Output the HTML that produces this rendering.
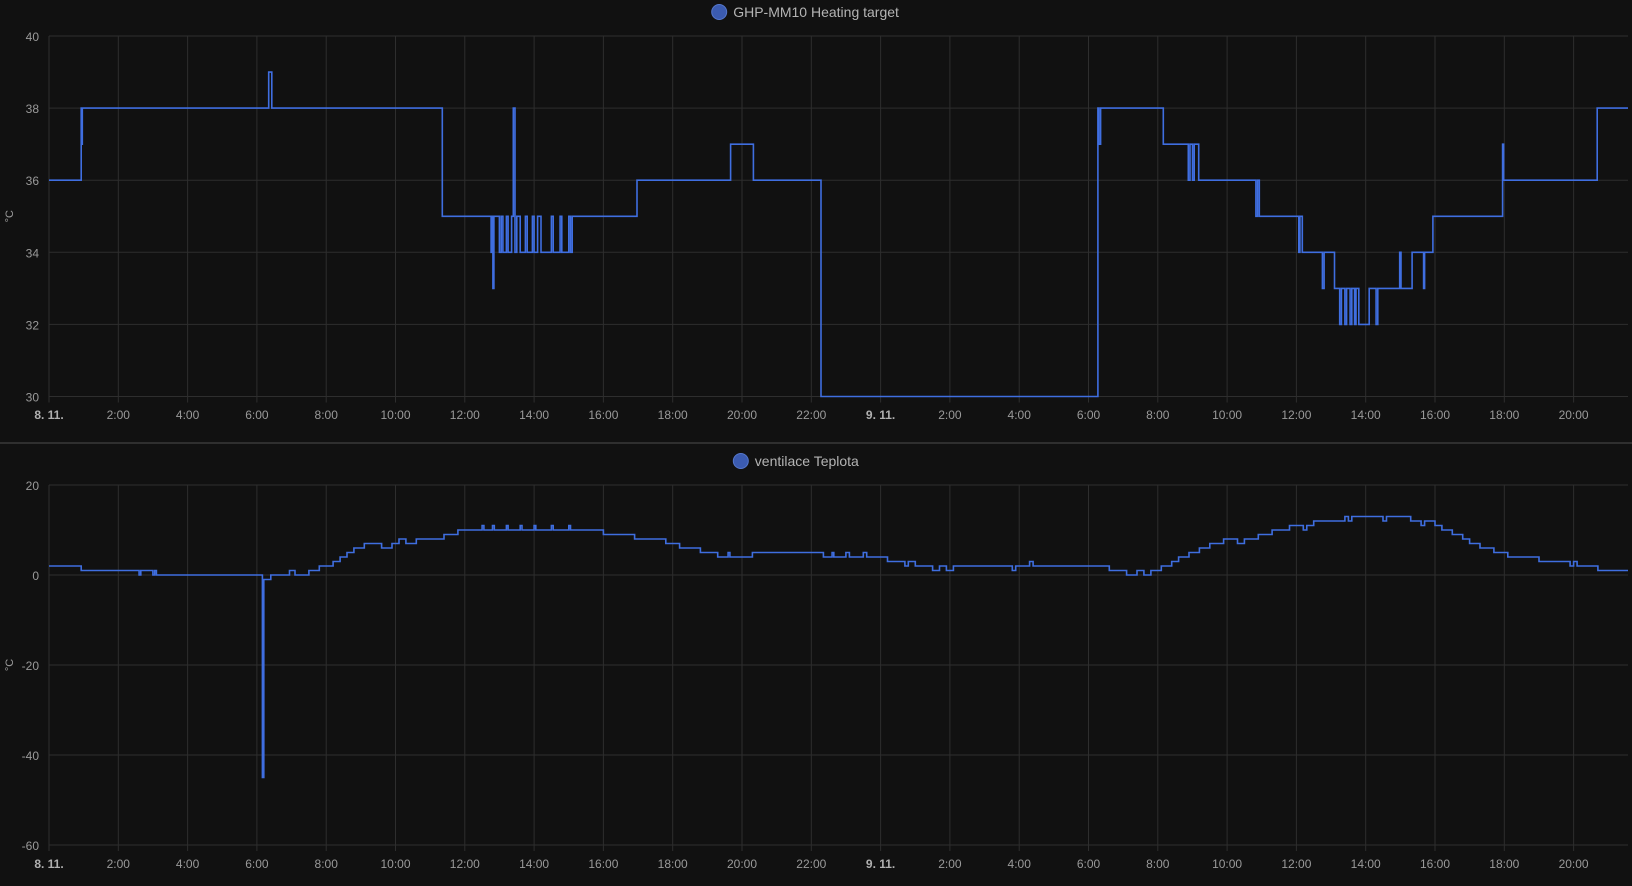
<!DOCTYPE html>
<html><head><meta charset="utf-8"><style>
html,body{margin:0;padding:0;background:#111111;width:1632px;height:886px;overflow:hidden}
svg{display:block}
text{font-family:"Liberation Sans",sans-serif;}
</style></head><body>
<svg id="s" width="1632" height="886" xmlns="http://www.w3.org/2000/svg">
<rect width="1632" height="886" fill="#111111"/>
<rect x="0" y="442" width="1632" height="2" fill="#2f2f2f"/>
<g id="g"></g>
</svg>
<script>
var NS="http://www.w3.org/2000/svg",g=document.getElementById('g');
function el(t,a,txt){var e=document.createElementNS(NS,t);for(var k in a)e.setAttribute(k,a[k]);if(txt!=null)e.textContent=txt;g.appendChild(e);return e;}
var X0=49,PX=34.65,XR=1628;
function hx(h){return X0+h*PX;}
function chart(top,bot,ymin,ymax,step,title,titleY,labY,data){
  var sc=(bot-top)/(ymax-ymin);
  function vy(v){return bot-(v-ymin)*sc;}
  for(var v=ymin;v<=ymax;v+=step){var y=vy(v);
    el('line',{x1:X0,x2:XR,y1:y,y2:y,stroke:'#2e2e2e','stroke-width':1});
    el('text',{x:39,y:y+5,'text-anchor':'end','font-size':12,fill:'#9a9a9a'},String(v));}
  var labs=['8. 11.','2:00','4:00','6:00','8:00','10:00','12:00','14:00','16:00','18:00','20:00','22:00','9. 11.','2:00','4:00','6:00','8:00','10:00','12:00','14:00','16:00','18:00','20:00'];
  for(var i=0;i<labs.length;i++){var x=hx(i*2);
    el('line',{x1:x,x2:x,y1:top,y2:bot+6,stroke:'#2e2e2e','stroke-width':1});
    var t=el('text',{x:x,y:labY,'text-anchor':'middle','font-size':12,fill:'#9a9a9a'},labs[i]);
    if(i==0||i==12){t.setAttribute('font-weight','bold');t.setAttribute('fill','#b0b0b0');}}
  var cy=(top+bot)/2;
  el('text',{x:0,y:0,'font-size':11,fill:'#9a9a9a','text-anchor':'middle',transform:'translate(13,'+cy+') rotate(-90)'},'°C');
  var tw=title.length*7.2;
  var cx=816-tw/2;
  el('circle',{cx:cx-14,cy:titleY-5,r:7.5,fill:'#3b5bb0',stroke:'#5577cc','stroke-width':1});
  el('text',{x:cx,y:titleY,'font-size':14,fill:'#b4b4b4'},title);
  var d='';
  for(var i=0;i<data.length;i++){var x=hx(data[i][0]).toFixed(1),y=vy(data[i][1]).toFixed(1);
    if(i==0)d='M'+x+' '+y;else d+=' H'+x+' V'+y;}
  d+=' H'+XR;
  el('path',{d:d,fill:'none',stroke:'#3f6ee0','stroke-width':1.6});
}
var top1=[[0,36],[0.93,38],[0.95,37],[0.96,38],[6.34,39],[6.43,38],[11.35,35],[12.76,34],[12.8,35],[12.81,33],[12.84,35],[13.0,34],[13.05,35],[13.1,34],[13.2,35],[13.25,34],[13.35,35],[13.4,38],[13.45,34],[13.5,35],[13.6,34],[13.75,35],[13.8,34],[13.95,35],[14.0,34],[14.1,35],[14.2,34],[14.5,35],[14.55,34],[14.75,35],[14.8,34],[15.0,35],[15.05,34],[15.1,35],[16.97,36],[19.67,37],[20.33,36],[22.28,30],[30.27,38],[30.3,37],[30.35,38],[32.16,37],[32.88,36],[32.93,37],[33.0,36],[33.05,37],[33.18,36],[34.83,35],[34.88,36],[34.93,35],[36.07,34],[36.1,35],[36.17,34],[36.75,33],[36.8,34],[37.1,33],[37.25,32],[37.3,33],[37.4,32],[37.45,33],[37.55,32],[37.6,33],[37.68,32],[37.72,33],[37.8,32],[38.1,33],[38.3,32],[38.35,33],[38.6,33],[38.98,34],[39.02,33],[39.34,34],[39.67,33],[39.7,34],[39.94,35],[41.95,37],[41.98,36],[44.68,38]];
var bot1=[[0,2],[0.93,1],[2.6,0],[2.65,1],[3.0,0],[3.05,1],[3.1,0],[6.16,-45],[6.2,-1],[6.4,0],[6.94,1],[7.1,0],[7.5,1],[7.8,2],[8.2,3],[8.4,4],[8.6,5],[8.8,6],[9.1,7],[9.6,6],[9.9,7],[10.1,8],[10.3,7],[10.6,8],[11.4,9],[11.8,10],[12.5,11],[12.55,10],[12.8,11],[12.85,10],[13.2,11],[13.25,10],[13.6,11],[13.65,10],[14.0,11],[14.05,10],[14.5,11],[14.55,10],[15.0,11],[15.05,10],[16.0,9],[16.9,8],[17.8,7],[18.2,6],[18.8,5],[19.3,4],[19.6,5],[19.65,4],[20.3,5],[22.3,5],[22.35,4],[22.6,5],[22.65,4],[23.0,5],[23.1,4],[23.5,5],[23.6,4],[24.2,3],[24.7,2],[24.8,3],[25.0,2],[25.5,1],[25.7,2],[25.9,1],[26.1,2],[26.5,2],[27.8,1],[27.9,2],[28.3,3],[28.4,2],[30.6,1],[31.1,0],[31.4,1],[31.6,0],[31.8,1],[32.1,2],[32.4,3],[32.6,4],[32.9,5],[33.2,6],[33.5,7],[33.9,8],[34.3,7],[34.5,8],[34.9,9],[35.3,10],[35.8,11],[36.2,10],[36.3,11],[36.5,12],[37.4,13],[37.5,12],[37.6,13],[38.5,12],[38.6,13],[39.3,12],[39.6,11],[39.7,12],[40.0,11],[40.2,10],[40.5,9],[40.8,8],[41.0,7],[41.3,6],[41.7,5],[42.1,4],[43.0,3],[43.9,2],[44.0,3],[44.1,2],[44.7,1]];
chart(36,396.5,30,40,2,'GHP-MM10 Heating target',17,419,top1);
chart(485,845,-60,20,20,'ventilace Teplota',466,868,bot1);
</script>
</body></html>
